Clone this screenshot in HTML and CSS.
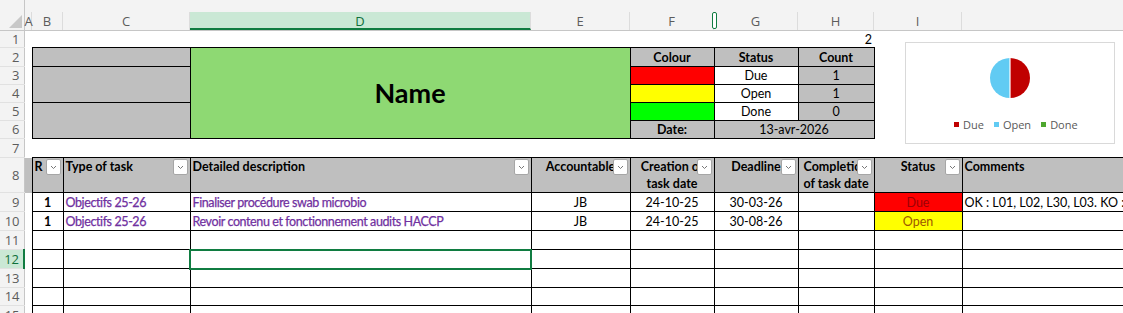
FILE: index.html
```html
<!DOCTYPE html>
<html lang="fr">
<head>
    <meta charset="UTF-8">
    <title>Suivi des tâches</title>
    <link rel="stylesheet" href="styles.css">
</head>
<body>
<div class="sheet">
    <table class="grid">
        <colgroup>
            <col class="w-rh"><col class="w-a"><col class="w-b"><col class="w-c"><col class="w-d">
            <col class="w-e"><col class="w-f"><col class="w-g"><col class="w-h"><col class="w-i"><col class="w-j">
        </colgroup>
        <thead>
            <tr class="letters">
                <th class="corner"><svg width="24" height="30" viewBox="0 0 24 30"><polygon points="22,15 22,28 9,28" fill="#c8c8c8"/></svg></th>
                <th><div>A</div></th>
                <th><div>B</div></th>
                <th><div>C</div></th>
                <th class="sel"><div>D</div></th>
                <th><div>E</div></th>
                <th><div>F</div></th>
                <th><div>G</div></th>
                <th><div>H</div></th>
                <th><div>I</div></th>
                <th><div></div></th>
            </tr>
        </thead>
        <tbody>
            <tr class="h17">
                <th class="rh">1</th><td></td><td></td><td></td><td></td><td></td><td></td><td></td>
                <td class="right">2</td><td></td><td></td>
            </tr>
            <tr class="h19">
                <th class="rh">2</th><td></td>
                <td class="b grey" colspan="2"></td>
                <td class="b name" colspan="2" rowspan="5">Name</td>
                <td class="b grey bold center">Colour</td>
                <td class="b grey bold center">Status</td>
                <td class="b grey bold center">Count</td>
                <td></td><td></td>
            </tr>
            <tr class="h18">
                <th class="rh">3</th><td></td>
                <td class="b grey" colspan="2" rowspan="2"></td>
                <td class="b red"></td>
                <td class="b center">Due</td>
                <td class="b grey center">1</td>
                <td></td><td></td>
            </tr>
            <tr class="h18">
                <th class="rh">4</th><td></td>
                <td class="b yellow"></td>
                <td class="b center">Open</td>
                <td class="b grey center">1</td>
                <td></td><td></td>
            </tr>
            <tr class="h18">
                <th class="rh">5</th><td></td>
                <td class="b grey" colspan="2" rowspan="2"></td>
                <td class="b green"></td>
                <td class="b center">Done</td>
                <td class="b grey center">0</td>
                <td></td><td></td>
            </tr>
            <tr class="h18">
                <th class="rh">6</th><td></td>
                <td class="b grey bold center">Date:</td>
                <td class="b grey center" colspan="2">13-avr-2026</td>
                <td></td><td></td>
            </tr>
            <tr class="h19">
                <th class="rh">7</th><td></td><td></td><td></td><td></td><td></td><td></td><td></td><td></td><td></td><td></td>
            </tr>
            <tr class="h35 head">
                <th class="rh">8</th><td></td>
                <td class="b">R<span class="dd"></span></td>
                <td class="b">Type of task<span class="dd"></span></td>
                <td class="b">Detailed description<span class="dd"></span></td>
                <td class="b center">Accountable<span class="dd"></span></td>
                <td class="b center">Creation of<br>task date<span class="dd"></span></td>
                <td class="b center">Deadline<span class="dd"></span></td>
                <td class="b center">Completion<br>of task date<span class="dd"></span></td>
                <td class="b center">Status<span class="dd"></span></td>
                <td class="b">Comments</td>
            </tr>
            <tr class="h19">
                <th class="rh">9</th><td></td>
                <td class="b bold center">1</td>
                <td class="b purple">Objectifs 25-26</td>
                <td class="b purple">Finaliser procédure swab microbio</td>
                <td class="b center">JB</td>
                <td class="b center">24-10-25</td>
                <td class="b center">30-03-26</td>
                <td class="b"></td>
                <td class="b center due">Due</td>
                <td class="b clip">OK : L01, L02, L30, L03. KO : U01, U02</td>
            </tr>
            <tr class="h19">
                <th class="rh">10</th><td></td>
                <td class="b bold center">1</td>
                <td class="b purple">Objectifs 25-26</td>
                <td class="b purple">Revoir contenu et fonctionnement audits HACCP</td>
                <td class="b center">JB</td>
                <td class="b center">24-10-25</td>
                <td class="b center">30-08-26</td>
                <td class="b"></td>
                <td class="b center open">Open</td>
                <td class="b"></td>
            </tr>
            <tr class="h19">
                <th class="rh">11</th><td></td>
                <td class="b"></td><td class="b"></td><td class="b"></td><td class="b"></td><td class="b"></td>
                <td class="b"></td><td class="b"></td><td class="b"></td><td class="b"></td>
            </tr>
            <tr class="h19">
                <th class="rh selrow">12</th><td></td>
                <td class="b"></td><td class="b"></td><td class="b active"></td><td class="b"></td><td class="b"></td>
                <td class="b"></td><td class="b"></td><td class="b"></td><td class="b"></td>
            </tr>
            <tr class="h19">
                <th class="rh">13</th><td></td>
                <td class="b"></td><td class="b"></td><td class="b"></td><td class="b"></td><td class="b"></td>
                <td class="b"></td><td class="b"></td><td class="b"></td><td class="b"></td>
            </tr>
            <tr class="h18">
                <th class="rh">14</th><td></td>
                <td class="b"></td><td class="b"></td><td class="b"></td><td class="b"></td><td class="b"></td>
                <td class="b"></td><td class="b"></td><td class="b"></td><td class="b"></td>
            </tr>
            <tr class="h19">
                <th class="rh">15</th><td></td>
                <td class="b"></td><td class="b"></td><td class="b"></td><td class="b"></td><td class="b"></td>
                <td class="b"></td><td class="b"></td><td class="b"></td><td class="b"></td>
            </tr>
        </tbody>
    </table>

    <!-- column resize handle between F and G -->
    <span class="handle"></span>

    <!-- status chart -->
    <div class="chart">
        <svg class="pie" width="44" height="44" viewBox="0 0 44 44">
            <path d="M22 2 A20 20 0 0 1 22 42 Z" fill="#c00000"/>
            <path d="M22 2 A20 20 0 0 0 22 42 Z" fill="#61cbf3"/>
            <line x1="22" y1="1" x2="22" y2="43" stroke="#fff" stroke-width="1.2"/>
        </svg>
        <div class="legend">
            <span><i class="k-due"></i>Due</span>
            <span><i class="k-open"></i>Open</span>
            <span><i class="k-done"></i>Done</span>
        </div>
    </div>
</div>
</body>
</html>
```

FILE: styles.css
```css
body {
    margin: 0;
    background: #fff;
    overflow: hidden;
    font-family: Lato, "Liberation Sans", sans-serif;
    font-size: 12.5px;
    color: #000;
}
.sheet {
    position: relative;
    width: 1123px;
    height: 313px;
    overflow: hidden;
}
.grid {
    border-collapse: collapse;
    table-layout: fixed;
    width: 1162px;
}
.w-rh { width: 24px; }
.w-a { width: 8px; }
.w-b { width: 31px; }
.w-c { width: 127px; }
.w-d { width: 341px; }
.w-e { width: 99px; }
.w-f { width: 84px; }
.w-g { width: 84px; }
.w-h { width: 76px; }
.w-i { width: 88px; }
.w-j { width: 200px; }

.grid td {
    padding: 0 2px;
    white-space: nowrap;
    overflow: hidden;
    line-height: 15px;
}

/* column letters */
.letters th {
    height: 30px;
    padding: 0;
    background: #f3f3f3;
    border-bottom: 1px solid #c6c6c6;
    vertical-align: bottom;
    font-family: "Open Sans", "Noto Sans", sans-serif;
    font-weight: normal;
    font-size: 13px;
    color: #5c5c5c;
}
.letters th div {
    height: 18px;
    line-height: 18px;
    border-right: 1px solid #dcdcdc;
    text-align: center;
}
.letters th.corner {
    border-right: 1px solid #c6c6c6;
}
.letters th.corner svg { display: block; }
.letters th.sel div {
    background: #cae8d5;
    color: #0f703b;
    height: 16px;
    border-bottom: 2px solid #107c41;
}

/* row numbers */
.rh {
    padding: 0 4px 0 0;
    background: #f3f3f3;
    border-right: 1px solid #c6c6c6;
    border-bottom: 1px solid #e1e1e1;
    text-align: right;
    font-family: "Open Sans", "Noto Sans", sans-serif;
    font-weight: normal;
    font-size: 13px;
    line-height: 15px;
    color: #5c5c5c;
}
.rh.selrow {
    background: #cae8d5;
    color: #0f703b;
    border-right: 2px solid #107c41;
}

.h17 { height: 17px; }
.h18 { height: 18px; }
.h19 { height: 19px; }
.h35 { height: 35px; }

.b { border: 1px solid #000; }
.grey { background: #bfbfbf; }
.bold { font-weight: bold; }
.center { text-align: center; }
.right { text-align: right; }
.red { background: #ff0000; }
.yellow { background: #ffff00; }
.green { background: #00ff00; }
.grid td.name {
    background: #8ed973;
    text-align: center;
    font-size: 27px;
    font-weight: bold;
    line-height: 30px;
}
.purple {
    color: #7030a0;
    letter-spacing: -0.4px;
    -webkit-text-stroke: 0.25px #7030a0;
}
.due { background: #ff0000; color: #9c0006; }
.open { background: #ffff00; color: #9c5700; }
.clip { text-overflow: clip; }
.grid td.active { border: 2px solid #107c41; }

/* table header row */
.grid .head td {
    position: relative;
    background: #bfbfbf;
    font-weight: bold;
    vertical-align: top;
    line-height: 17px;
    padding-top: 0;
}
.dd {
    position: absolute;
    top: 1px;
    right: 2px;
    width: 13px;
    height: 14px;
    border: 1px solid #a6a6a6;
    border-radius: 2px;
    background: #fff url("data:image/svg+xml;utf8,<svg xmlns='http://www.w3.org/2000/svg' width='13' height='14'><polyline points='4,6 6.5,8.5 9,6' fill='none' stroke='%23777' stroke-width='1'/></svg>") no-repeat center;
}

.handle {
    position: absolute;
    left: 712px;
    top: 12px;
    width: 3px;
    height: 15px;
    border: 1px solid #107c41;
    border-radius: 2px;
    background: #fff;
}

/* chart */
.chart {
    position: absolute;
    left: 905px;
    top: 42px;
    width: 208px;
    height: 100px;
    border: 1px solid #d9d9d9;
    background: #fff;
}
.pie {
    position: absolute;
    left: 82px;
    top: 13px;
}
.legend {
    position: absolute;
    left: 48px;
    top: 74px;
    display: flex;
    gap: 10px;
    font-family: "Open Sans", "Noto Sans", sans-serif;
    font-size: 11px;
    color: #595959;
}
.legend span {
    display: flex;
    align-items: center;
    gap: 4px;
}
.legend i {
    display: inline-block;
    width: 5px;
    height: 5px;
}
.k-due { background: #c00000; }
.k-open { background: #61cbf3; }
.k-done { background: #4ea72e; }
```
